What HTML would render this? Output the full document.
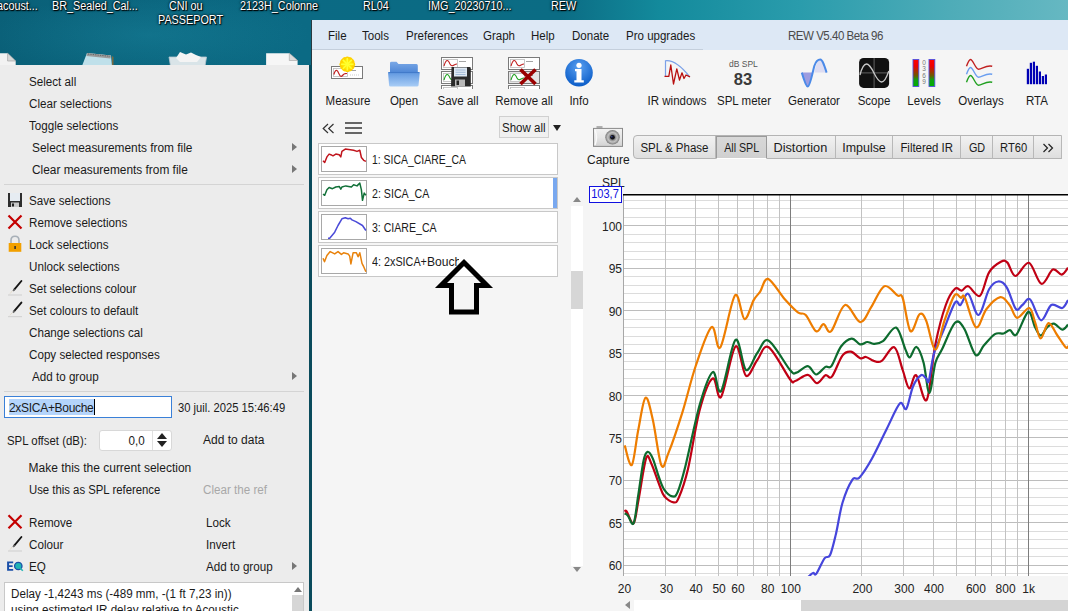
<!DOCTYPE html>
<html><head><meta charset="utf-8">
<style>
*{margin:0;padding:0;box-sizing:border-box}
html,body{width:1068px;height:611px;overflow:hidden;background:#0b6a80}
body{position:relative;font-family:"Liberation Sans",sans-serif;font-size:12px;color:#1a1a1a}
.a{position:absolute;white-space:nowrap}
#desk{position:absolute;left:0;top:0;width:1068px;height:611px;background:radial-gradient(ellipse 160px 40px at 150px 35px,rgba(30,140,165,.35),rgba(30,140,165,0)),linear-gradient(90deg,#0a6078 0px,#0b6a84 300px,#0b6c84 560px,#138a9c 660px,#2a9cac 800px,#4eacb8 950px,#66b8c2 1068px)}
.dt{position:absolute;transform:scaleX(0.9);transform-origin:0 0;color:#fff;font-size:12px;text-shadow:0 0 2px #000,0 0 3px rgba(0,0,0,.7),1px 1px 1px #000;white-space:nowrap;line-height:14px}
#menu{position:absolute;left:0;top:65px;width:309px;height:546px;background:#ececec}
.mi{position:absolute;left:28.5px;line-height:14px;white-space:nowrap;transform:scaleX(0.97);transform-origin:0 0}
.sep{position:absolute;left:4px;width:300px;height:1px;background:#d4d4d4}
.sub{position:absolute;left:292px;width:0;height:0;border-top:4px solid transparent;border-bottom:4px solid transparent;border-left:5px solid #777}
#win{position:absolute;left:311px;top:20px;width:757px;height:591px;background:#f5f5f5;border-left:1px solid #2a3a40}
#mbar{position:absolute;left:312px;top:20px;width:756px;height:30px;background:#dde8f5}
.mb{position:absolute;top:29px;line-height:14px;white-space:nowrap;transform:scaleX(0.96);transform-origin:0 0}
.tl{position:absolute;top:94px;line-height:14px;white-space:nowrap;font-size:12px;transform:scaleX(0.96)}
.row{position:absolute;left:318px;width:240px;height:32px;background:#fff;border:1px solid #c8c8c8}
.thumb{position:absolute;left:2px;top:2px;width:46px;height:26px;border:1.3px solid #a8a8a8;background:#fff}
.rl{position:absolute;left:52.5px;top:9px;transform:scaleX(0.87);transform-origin:0 0;line-height:14px;white-space:nowrap}
.tab{position:absolute;top:136px;height:23px;line-height:24px;text-align:center;border-right:1px solid #b8b8b8;white-space:nowrap}
.yl{position:absolute;right:446px;line-height:14px;text-align:right;color:#222}
.xl{position:absolute;top:582px;line-height:14px;color:#222;white-space:nowrap}
</style></head><body>
<div id="desk"></div>
<!-- desktop labels -->
<div class="dt" style="left:-3px;top:-1px">acoust...</div>
<div class="dt" style="left:52px;top:-1px">BR_Sealed_Cal...</div>
<div class="dt" style="left:169px;top:-1px">CNI ou</div>
<div class="dt" style="left:158px;top:13px">PASSEPORT</div>
<div class="dt" style="left:240px;top:-1px">2123H_Colonne</div>
<div class="dt" style="left:363px;top:-1px">RL04</div>
<div class="dt" style="left:428px;top:-1px">IMG_20230710...</div>
<div class="dt" style="left:551px;top:-1px">REW</div>
<!-- desktop icons peeking -->
<svg class="a" style="left:0;top:48px" width="312" height="17" viewBox="0 48 312 17">
<path d="M-1,53.2 L7.6,53.2 L15.7,61 L15.7,66 L-1,66 Z" fill="#f2f2f2"/>
<path d="M7.6,53.2 L7.6,61 L15.7,61 Z" fill="#d8d8d8" stroke="#9a9a9a" stroke-width="0.6"/>
<path d="M87,53 L111,55.5 L112,66 L82,66 Z" fill="#bfe0ea"/>
<path d="M87,53 L111,55.5 L110.5,58.5 L86.5,56 Z" fill="#9a9a9a"/>
<path d="M88,54 L110,56.3" stroke="#555" stroke-width="0.8" stroke-dasharray="1.2,1.2"/>
<path d="M112,56 L113.5,57 L113.5,66 L112,66 Z" fill="#7a6a40"/>
<path d="M169,57 L206.5,57 L205,66 L170.5,66 Z" fill="#d9e4e8" stroke="#b8c8d0" stroke-width="0.8"/>
<path d="M176,58 L180,52 L186,54.5 L191,52.5 L196,55 L201,57 L197,62 L180,62 Z" fill="#f4f4f4"/>
<path d="M266.1,53.2 L289.3,53.2 L297.6,60.5 L297.6,66 L266.1,66 Z" fill="#f6f6f6"/>
<path d="M289.3,53.2 L289.3,60.5 L297.6,60.5 Z" fill="#dcdcdc" stroke="#a0a0a0" stroke-width="0.6"/>
</svg>
<!-- REW window -->
<div id="win"></div><div class="a" style="left:309px;top:65px;width:3px;height:546px;background:#0a4b5c"></div>
<div id="mbar"></div><div class="a" style="left:312px;top:49px;width:391px;height:1px;background:#c4cfdc"></div>
<div class="mb" style="left:328px">File</div>
<div class="mb" style="left:362px">Tools</div>
<div class="mb" style="left:406px">Preferences</div>
<div class="mb" style="left:483px">Graph</div>
<div class="mb" style="left:531px">Help</div>
<div class="mb" style="left:572px">Donate</div>
<div class="mb" style="left:626px">Pro upgrades</div>
<div class="mb" style="left:788px;color:#4a4a4a;letter-spacing:-0.5px">REW V5.40 Beta 96</div>

<div class="tl" style="left:347.7px;width:100px;margin-left:-50px;text-align:center">Measure</div>
<div class="tl" style="left:404.3px;width:100px;margin-left:-50px;text-align:center">Open</div>
<div class="tl" style="left:457.6px;width:100px;margin-left:-50px;text-align:center">Save all</div>
<div class="tl" style="left:524.1px;width:100px;margin-left:-50px;text-align:center">Remove all</div>
<div class="tl" style="left:579.4px;width:100px;margin-left:-50px;text-align:center">Info</div>
<div class="tl" style="left:677.0px;width:100px;margin-left:-50px;text-align:center">IR windows</div>
<div class="tl" style="left:743.5px;width:100px;margin-left:-50px;text-align:center">SPL meter</div>
<div class="tl" style="left:814.2px;width:100px;margin-left:-50px;text-align:center">Generator</div>
<div class="tl" style="left:874.1px;width:100px;margin-left:-50px;text-align:center">Scope</div>
<div class="tl" style="left:924.1px;width:100px;margin-left:-50px;text-align:center">Levels</div>
<div class="tl" style="left:980.8px;width:100px;margin-left:-50px;text-align:center">Overlays</div>
<div class="tl" style="left:1037.3px;width:100px;margin-left:-50px;text-align:center">RTA</div>
<svg class="a" style="left:328px;top:55px" width="40" height="28" viewBox="328 55 40 28"><rect x="331.5" y="66.5" width="31" height="12" fill="#fff" stroke="#7a7a7a" stroke-width="1"/><rect x="333.5" y="68.5" width="14" height="8" fill="#fff" stroke="#bbb" stroke-width="0.8"/><path d="M333.8,74.5 C335,71 336,69.8 337,70.5 C338.5,71.5 339.5,76.5 341,76.4 C342.5,76.3 343.5,73.6 345,73.6 L347,73.5" fill="none" stroke="#c02020" stroke-width="1.2"/><line x1="349" y1="70.5" x2="356" y2="70.5" stroke="#666" stroke-width="0.6"/><line x1="350" y1="75" x2="359" y2="75" stroke="#999" stroke-width="0.5" stroke-dasharray="1,1"/><g transform="translate(347.3,64.3)"><ellipse cx="0" cy="-5" rx="2.6" ry="2.8" fill="#ffd200" transform="rotate(0)"/><ellipse cx="0" cy="-5" rx="2.6" ry="2.8" fill="#ffd200" transform="rotate(30)"/><ellipse cx="0" cy="-5" rx="2.6" ry="2.8" fill="#ffd200" transform="rotate(60)"/><ellipse cx="0" cy="-5" rx="2.6" ry="2.8" fill="#ffd200" transform="rotate(90)"/><ellipse cx="0" cy="-5" rx="2.6" ry="2.8" fill="#ffd200" transform="rotate(120)"/><ellipse cx="0" cy="-5" rx="2.6" ry="2.8" fill="#ffd200" transform="rotate(150)"/><ellipse cx="0" cy="-5" rx="2.6" ry="2.8" fill="#ffd200" transform="rotate(180)"/><ellipse cx="0" cy="-5" rx="2.6" ry="2.8" fill="#ffd200" transform="rotate(210)"/><ellipse cx="0" cy="-5" rx="2.6" ry="2.8" fill="#ffd200" transform="rotate(240)"/><ellipse cx="0" cy="-5" rx="2.6" ry="2.8" fill="#ffd200" transform="rotate(270)"/><ellipse cx="0" cy="-5" rx="2.6" ry="2.8" fill="#ffd200" transform="rotate(300)"/><ellipse cx="0" cy="-5" rx="2.6" ry="2.8" fill="#ffd200" transform="rotate(330)"/><circle cx="0" cy="0" r="5.2" fill="#ffe600"/><line x1="0" y1="0" x2="0" y2="-6.3" stroke="#ffff30" stroke-width="1.6" transform="rotate(0)"/><line x1="0" y1="0" x2="0" y2="-6.3" stroke="#ffff30" stroke-width="1.6" transform="rotate(45)"/><line x1="0" y1="0" x2="0" y2="-6.3" stroke="#ffff30" stroke-width="1.6" transform="rotate(90)"/><line x1="0" y1="0" x2="0" y2="-6.3" stroke="#ffff30" stroke-width="1.6" transform="rotate(135)"/><line x1="0" y1="0" x2="0" y2="-6.3" stroke="#ffff30" stroke-width="1.6" transform="rotate(180)"/><line x1="0" y1="0" x2="0" y2="-6.3" stroke="#ffff30" stroke-width="1.6" transform="rotate(225)"/><line x1="0" y1="0" x2="0" y2="-6.3" stroke="#ffff30" stroke-width="1.6" transform="rotate(270)"/><line x1="0" y1="0" x2="0" y2="-6.3" stroke="#ffff30" stroke-width="1.6" transform="rotate(315)"/></g></svg>
<svg class="a" style="left:385px;top:58px" width="40" height="32" viewBox="385 58 40 32"><defs><linearGradient id="fb" x1="0" y1="0" x2="0" y2="1"><stop offset="0" stop-color="#7aa8e6"/><stop offset="1" stop-color="#4d86d6"/></linearGradient><linearGradient id="ff" x1="0" y1="0" x2="0" y2="1"><stop offset="0" stop-color="#5f97e0"/><stop offset="1" stop-color="#a9cdf6"/></linearGradient></defs><path d="M390,63 Q390,61.8 391.5,61.8 L396.5,61.8 L398.5,64 L416.5,64 Q417.8,64 417.8,65.5 L417.8,73 L390,73 Z" fill="url(#fb)"/><path d="M388,72.2 L419.8,72.2 L418.5,85.5 Q418.3,86.6 417,86.6 L390.5,86.6 Q389.2,86.6 389.1,85.5 Z" fill="url(#ff)"/><line x1="388.5" y1="72.6" x2="419.3" y2="72.6" stroke="#3f78c8" stroke-width="1"/></svg>
<svg class="a" style="left:438px;top:55px" width="40" height="34" viewBox="438 55 40 34"><rect x="441.5" y="57.5" width="31" height="12" fill="#fff" stroke="#7a7a7a" stroke-width="1"/><rect x="443.5" y="59.5" width="14" height="8" fill="#fff" stroke="#bbb" stroke-width="0.8"/><path d="M444,66 c2,-7 4,-7 6,-2 c2,4 4,0 7,0" fill="none" stroke="#c02020" stroke-width="1.1"/><line x1="459" y1="61.5" x2="466" y2="61.5" stroke="#666" stroke-width="0.6"/><rect x="441.5" y="71.5" width="31" height="12" fill="#fff" stroke="#7a7a7a" stroke-width="1"/><rect x="443.5" y="73.5" width="14" height="8" fill="#fff" stroke="#bbb" stroke-width="0.8"/><path d="M444,80 c2,-7 4,-7 6,-2 c2,4 4,0 7,0" fill="none" stroke="#20a020" stroke-width="1.1"/><line x1="459" y1="75.5" x2="466" y2="75.5" stroke="#666" stroke-width="0.6"/><rect x="441.5" y="85.5" width="31" height="12" fill="#fff" stroke="#7a7a7a" stroke-width="1"/><rect x="443.5" y="87.5" width="14" height="8" fill="#fff" stroke="#bbb" stroke-width="0.8"/><line x1="459" y1="89.5" x2="466" y2="89.5" stroke="#666" stroke-width="0.6"/><path d="M451.5,68 Q451,67 452,67 L469.5,67 Q470.8,67 470.8,68.3 L470.8,86.5 L451,86.5 Z" fill="#2a2a2a"/><rect x="454" y="67.5" width="13" height="9" fill="#dfe9f3"/><line x1="455.5" y1="70" x2="465.5" y2="70" stroke="#8aa8c8" stroke-width="0.7"/><line x1="455.5" y1="72.3" x2="465.5" y2="72.3" stroke="#8aa8c8" stroke-width="0.7"/><line x1="455.5" y1="74.5" x2="465.5" y2="74.5" stroke="#8aa8c8" stroke-width="0.7"/><rect x="455" y="79.5" width="10" height="7" fill="#b8b8b8"/><rect x="456.5" y="80.5" width="2.5" height="4.5" fill="#222"/></svg>
<svg class="a" style="left:505px;top:55px" width="40" height="34" viewBox="505 55 40 34"><rect x="508.5" y="57.5" width="31" height="12" fill="#fff" stroke="#7a7a7a" stroke-width="1"/><rect x="510.5" y="59.5" width="14" height="8" fill="#fff" stroke="#bbb" stroke-width="0.8"/><path d="M511,66 c2,-7 4,-7 6,-2 c2,4 4,0 7,0" fill="none" stroke="#c02020" stroke-width="1.1"/><line x1="526" y1="61.5" x2="533" y2="61.5" stroke="#666" stroke-width="0.6"/><rect x="508.5" y="71.5" width="31" height="12" fill="#e4e4e4" stroke="#7a7a7a" stroke-width="1"/><rect x="510.5" y="73.5" width="14" height="8" fill="#fff" stroke="#bbb" stroke-width="0.8"/><path d="M511,80 c2,-7 4,-7 6,-2 c2,4 4,0 7,0" fill="none" stroke="#20a020" stroke-width="1.1"/><line x1="526" y1="75.5" x2="533" y2="75.5" stroke="#666" stroke-width="0.6"/><rect x="508.5" y="85.5" width="31" height="12" fill="#fff" stroke="#7a7a7a" stroke-width="1"/><rect x="510.5" y="87.5" width="14" height="8" fill="#fff" stroke="#bbb" stroke-width="0.8"/><line x1="526" y1="89.5" x2="533" y2="89.5" stroke="#666" stroke-width="0.6"/><path d="M520.5,69.5 L535.5,84 M535.5,69.5 L520.5,84" stroke="#9a0000" stroke-width="3.6" stroke-linecap="butt"/></svg>
<svg class="a" style="left:563px;top:57px" width="32" height="32" viewBox="563 57 32 32"><defs><radialGradient id="ig" cx="0.5" cy="0.3" r="0.7"><stop offset="0" stop-color="#5aa0f0"/><stop offset="1" stop-color="#0a5cc8"/></radialGradient></defs><circle cx="579" cy="72.8" r="13.8" fill="url(#ig)"/><circle cx="579" cy="65.3" r="2.6" fill="#fff"/><path d="M575,69 L581.5,69 L581.5,80.3 L583.8,80.3 L583.8,82.6 L574.3,82.6 L574.3,80.3 L576.5,80.3 L576.5,71.3 L575,71.3 Z" fill="#fff"/></svg>
<svg class="a" style="left:660px;top:57px" width="34" height="30" viewBox="660 57 34 30"><path d="M665.5,76.5 L665.5,60.8 Q676,59.5 689.8,77" fill="none" stroke="#7aa0e8" stroke-width="1.2"/><path d="M664.5,76.3 L668.8,76.3 L670.8,65 L673.5,84 L676.8,68.8 L679.5,80 L682,72.8 L684,78.5 L686,75 L690,76.8" fill="none" stroke="#b81010" stroke-width="1.3" stroke-linejoin="round"/></svg>
<div class="a" style="left:729px;top:59px;font-size:8.5px;line-height:10px;color:#555;width:28px;text-align:center">dB SPL</div>
<div class="a" style="left:729px;top:70px;font-size:16.5px;font-weight:bold;line-height:18px;color:#3a3a3a;width:28px;text-align:center">83</div>
<svg class="a" style="left:798px;top:56px" width="32" height="34" viewBox="798 56 32 34"><path d="M801.8,72.6 C804,80 806,86.6 807.7,86.6 C809.5,86.6 811,79 812.2,72.6 Z" fill="#9c9ce0"/><path d="M814.3,72.6 C815.5,66 818,59.6 820.3,59.6 C822.5,59.6 824.5,66 826.6,72.6 Z" fill="#dcdcf2"/><path d="M801.8,72.6 C804,80 806,86.6 807.7,86.6 C810,86.6 812.5,72.6 814.3,66 C815.8,61.5 818,59.6 820.3,59.6 C822.5,59.6 824.5,66 826.6,72.6" fill="none" stroke="#4a8ae8" stroke-width="2"/></svg>
<svg class="a" style="left:857px;top:56px" width="34" height="34" viewBox="857 56 34 34"><rect x="859.1" y="57.9" width="30" height="30" rx="4.5" fill="#111"/><line x1="874.1" y1="58" x2="874.1" y2="88" stroke="#777" stroke-width="0.8"/><line x1="859" y1="72.9" x2="889" y2="72.9" stroke="#777" stroke-width="0.8"/><path d="M860,75 C862,67 864.5,64 866.5,64 C869,64 871.5,68 874,73 C876.5,78 879,82 881.5,82 C884,82 886.5,78 888.8,71" fill="none" stroke="#c8c8c8" stroke-width="1.3"/></svg>
<svg class="a" style="left:910px;top:57px" width="28" height="32" viewBox="910 57 28 32"><defs><linearGradient id="lv" x1="0" y1="0" x2="0" y2="1"><stop offset="0" stop-color="#ff0000"/><stop offset="0.25" stop-color="#ee0000"/><stop offset="0.6" stop-color="#6a5a00"/><stop offset="0.75" stop-color="#10a010"/><stop offset="1" stop-color="#00b000"/></linearGradient></defs><rect x="913" y="59.5" width="5.8" height="27" fill="url(#lv)" stroke="#5050e0" stroke-width="0.9"/><rect x="929" y="59.5" width="5.8" height="27" fill="url(#lv)" stroke="#5050e0" stroke-width="0.9"/><text x="924" y="64.8" font-size="6.5" fill="#777" text-anchor="middle" font-family="Liberation Sans">0</text><text x="924" y="71.3" font-size="6.5" fill="#777" text-anchor="middle" font-family="Liberation Sans">3</text><text x="924" y="77.8" font-size="6.5" fill="#777" text-anchor="middle" font-family="Liberation Sans">6</text><text x="924" y="84.3" font-size="6.5" fill="#777" text-anchor="middle" font-family="Liberation Sans">9</text></svg>
<svg class="a" style="left:963px;top:56px" width="32" height="32" viewBox="963 56 32 32"><path d="M966.5,66.2 C968,62.2 969.5,59.5 970.5,59.5 C973,59.5 975.5,69.2 978.5,69.2 C982,69.2 986,64.7 992.2,66.2" fill="none" stroke="#c02020" stroke-width="1.4"/><path d="M966.5,74.2 C968,70.2 969.5,67.5 970.5,67.5 C973,67.5 975.5,77.2 978.5,77.2 C982,77.2 986,72.7 992.2,74.2" fill="none" stroke="#6a9ef0" stroke-width="1.4"/><path d="M966.5,82.2 C968,78.2 969.5,75.5 970.5,75.5 C973,75.5 975.5,85.2 978.5,85.2 C982,85.2 986,80.7 992.2,82.2" fill="none" stroke="#20a020" stroke-width="1.4"/></svg>
<svg class="a" style="left:1024px;top:58px" width="26" height="30" viewBox="1024 58 26 30"><rect x="1026.8" y="68.8" width="2.2" height="15.400000000000006" fill="#0000b4"/><rect x="1029.8" y="62.8" width="2.2" height="21.400000000000006" fill="#0000b4"/><rect x="1032.8" y="61.7" width="2.2" height="22.5" fill="#0000b4"/><rect x="1035.8" y="65.8" width="2.2" height="18.400000000000006" fill="#0000b4"/><rect x="1038.8" y="71.5" width="2.2" height="12.700000000000003" fill="#0000b4"/><rect x="1041.8" y="76" width="2.2" height="8.200000000000003" fill="#0000b4"/><rect x="1044.8" y="74.5" width="2.2" height="9.700000000000003" fill="#0000b4"/></svg>

<!-- measurement panel -->
<svg class="a" style="left:320px;top:121px" width="16" height="14" viewBox="320 121 16 14"><path d="M328,124 L323.2,128.5 L328,133 M333.5,124 L328.7,128.5 L333.5,133" fill="none" stroke="#333" stroke-width="1.2"/></svg>
<div class="a" style="left:345px;top:122px;width:17px;height:2px;background:#666"></div>
<div class="a" style="left:345px;top:127px;width:17px;height:2px;background:#666"></div>
<div class="a" style="left:345px;top:132px;width:17px;height:2px;background:#666"></div>
<div class="a" style="left:499px;top:116px;width:50px;height:22px;border:1px solid #d0d0d0;background:#f0f0f0"></div>
<div class="a" style="left:502px;top:121px;line-height:14px;transform:scaleX(0.96);transform-origin:0 0">Show all</div>
<div class="a" style="left:553px;top:125px;width:0;height:0;border-left:4.5px solid transparent;border-right:4.5px solid transparent;border-top:6px solid #222"></div>
<div class="row" style="top:143px;overflow:hidden"><div class="thumb"></div><div class="a" style="left:52px;top:0;width:180px;height:30px;overflow:hidden"><div class="rl" style="left:0.5px;transform:scaleX(0.87)">1: SICA_CIARE_CA</div></div></div>
<div class="row" style="top:177px;overflow:hidden"><div class="thumb"></div><div class="a" style="left:52px;top:0;width:180px;height:30px;overflow:hidden"><div class="rl" style="left:0.5px;transform:scaleX(0.887)">2: SICA_CA</div></div><div class="a" style="left:234px;top:0;width:4px;height:30px;background:#79a8ef"></div></div>
<div class="row" style="top:211px;overflow:hidden"><div class="thumb"></div><div class="a" style="left:52px;top:0;width:180px;height:30px;overflow:hidden"><div class="rl" style="left:0.5px;transform:scaleX(0.88)">3: CIARE_CA</div></div></div>
<div class="row" style="top:245px;overflow:hidden"><div class="thumb"></div><div class="a" style="left:52px;top:0;width:88px;height:30px;overflow:hidden"><div class="rl" style="left:0.5px;transform:scaleX(0.9)">4: 2xSICA+<span style="display:inline-block;transform:scaleX(1.12);transform-origin:0 0">Bouche</span></div></div></div>
<div class="a" style="left:571px;top:206px;width:12px;height:360px;background:#fff"></div>
<div class="a" style="left:571px;top:271px;width:12px;height:38px;background:#d6d6d6"></div>
<div class="a" style="left:573px;top:197px;width:0;height:0;border-left:4px solid transparent;border-right:4px solid transparent;border-bottom:5px solid #888"></div>
<div class="a" style="left:573px;top:567px;width:0;height:0;border-left:4px solid transparent;border-right:4px solid transparent;border-top:5px solid #888"></div>
<svg class="a" style="left:430px;top:250px" width="70" height="70" viewBox="430 250 70 70"><path d="M464,262.5 L441,285.5 L451.5,285.5 L451.5,312 L476.5,312 L476.5,285.5 L487,285.5 Z" fill="none" stroke="#000" stroke-width="5" stroke-linejoin="miter"/></svg>
<svg class="a" style="left:318px;top:143px" width="52" height="136" viewBox="318 143 52 136"><polyline points="323.0,160.8 324.7,162.5 326.9,156.9 329.1,154.1 330.8,154.7 333.0,155.8 335.8,154.1 339.2,154.7 340.8,156.9 341.9,151.4 345.3,149.1 350.3,149.7 353.6,150.2 357.0,151.4 359.8,150.2 361.4,157.5 363.7,160.3 365.9,161.4" fill="none" stroke="#c0141c" stroke-width="1.5" stroke-linejoin="round"/><polyline points="323.0,194.2 324.7,195.3 326.9,189.8 329.1,187.5 332.5,188.7 335.8,187.0 339.2,186.4 340.8,189.2 341.9,187.0 345.8,185.9 351.4,187.0 353.6,184.8 357.0,185.9 359.8,183.1 361.4,189.8 362.5,200.3 364.2,193.1 365.9,195.3" fill="none" stroke="#117038" stroke-width="1.5" stroke-linejoin="round"/><polyline points="328.0,238.3 329.7,238.3 334.7,232.2 338.0,225.5 341.9,218.8 345.3,217.7 348.1,218.8 350.3,218.2 352.0,219.9 355.9,221.6 362.5,225.5 365.9,230.5" fill="none" stroke="#4a4ad8" stroke-width="1.5" stroke-linejoin="round"/><polyline points="323.0,258.3 324.5,261.7 326.9,255.5 330.2,251.6 334.7,253.9 338.0,251.6 341.4,254.4 343.6,252.8 348.1,253.9 349.7,256.1 350.9,263.9 353.1,252.8 356.4,252.8 358.1,256.7 359.8,252.8 362.0,263.3 363.7,266.7 365.9,271.7" fill="none" stroke="#e8820c" stroke-width="1.5" stroke-linejoin="round"/></svg>

<!-- graph -->
<svg class="a" style="left:623px;top:194px" width="445" height="382" viewBox="623 194 445 382">
<rect x="623" y="194" width="445" height="382" fill="#fff"/>
<line x1="623" y1="573.5" x2="1068" y2="573.5" stroke="#dcdcdc" stroke-width="1" shape-rendering="crispEdges"/>
<line x1="623" y1="565.5" x2="1068" y2="565.5" stroke="#bdbdbd" stroke-width="1" shape-rendering="crispEdges"/>
<line x1="623" y1="556.5" x2="1068" y2="556.5" stroke="#dcdcdc" stroke-width="1" shape-rendering="crispEdges"/>
<line x1="623" y1="548.5" x2="1068" y2="548.5" stroke="#dcdcdc" stroke-width="1" shape-rendering="crispEdges"/>
<line x1="623" y1="539.5" x2="1068" y2="539.5" stroke="#dcdcdc" stroke-width="1" shape-rendering="crispEdges"/>
<line x1="623" y1="531.5" x2="1068" y2="531.5" stroke="#dcdcdc" stroke-width="1" shape-rendering="crispEdges"/>
<line x1="623" y1="522.5" x2="1068" y2="522.5" stroke="#bdbdbd" stroke-width="1" shape-rendering="crispEdges"/>
<line x1="623" y1="514.5" x2="1068" y2="514.5" stroke="#dcdcdc" stroke-width="1" shape-rendering="crispEdges"/>
<line x1="623" y1="505.5" x2="1068" y2="505.5" stroke="#dcdcdc" stroke-width="1" shape-rendering="crispEdges"/>
<line x1="623" y1="497.5" x2="1068" y2="497.5" stroke="#dcdcdc" stroke-width="1" shape-rendering="crispEdges"/>
<line x1="623" y1="488.5" x2="1068" y2="488.5" stroke="#dcdcdc" stroke-width="1" shape-rendering="crispEdges"/>
<line x1="623" y1="480.5" x2="1068" y2="480.5" stroke="#bdbdbd" stroke-width="1" shape-rendering="crispEdges"/>
<line x1="623" y1="471.5" x2="1068" y2="471.5" stroke="#dcdcdc" stroke-width="1" shape-rendering="crispEdges"/>
<line x1="623" y1="463.5" x2="1068" y2="463.5" stroke="#dcdcdc" stroke-width="1" shape-rendering="crispEdges"/>
<line x1="623" y1="454.5" x2="1068" y2="454.5" stroke="#dcdcdc" stroke-width="1" shape-rendering="crispEdges"/>
<line x1="623" y1="446.5" x2="1068" y2="446.5" stroke="#dcdcdc" stroke-width="1" shape-rendering="crispEdges"/>
<line x1="623" y1="437.5" x2="1068" y2="437.5" stroke="#bdbdbd" stroke-width="1" shape-rendering="crispEdges"/>
<line x1="623" y1="429.5" x2="1068" y2="429.5" stroke="#dcdcdc" stroke-width="1" shape-rendering="crispEdges"/>
<line x1="623" y1="420.5" x2="1068" y2="420.5" stroke="#dcdcdc" stroke-width="1" shape-rendering="crispEdges"/>
<line x1="623" y1="412.5" x2="1068" y2="412.5" stroke="#dcdcdc" stroke-width="1" shape-rendering="crispEdges"/>
<line x1="623" y1="403.5" x2="1068" y2="403.5" stroke="#dcdcdc" stroke-width="1" shape-rendering="crispEdges"/>
<line x1="623" y1="395.5" x2="1068" y2="395.5" stroke="#bdbdbd" stroke-width="1" shape-rendering="crispEdges"/>
<line x1="623" y1="386.5" x2="1068" y2="386.5" stroke="#dcdcdc" stroke-width="1" shape-rendering="crispEdges"/>
<line x1="623" y1="378.5" x2="1068" y2="378.5" stroke="#dcdcdc" stroke-width="1" shape-rendering="crispEdges"/>
<line x1="623" y1="369.5" x2="1068" y2="369.5" stroke="#dcdcdc" stroke-width="1" shape-rendering="crispEdges"/>
<line x1="623" y1="361.5" x2="1068" y2="361.5" stroke="#dcdcdc" stroke-width="1" shape-rendering="crispEdges"/>
<line x1="623" y1="353.5" x2="1068" y2="353.5" stroke="#bdbdbd" stroke-width="1" shape-rendering="crispEdges"/>
<line x1="623" y1="344.5" x2="1068" y2="344.5" stroke="#dcdcdc" stroke-width="1" shape-rendering="crispEdges"/>
<line x1="623" y1="336.5" x2="1068" y2="336.5" stroke="#dcdcdc" stroke-width="1" shape-rendering="crispEdges"/>
<line x1="623" y1="327.5" x2="1068" y2="327.5" stroke="#dcdcdc" stroke-width="1" shape-rendering="crispEdges"/>
<line x1="623" y1="319.5" x2="1068" y2="319.5" stroke="#dcdcdc" stroke-width="1" shape-rendering="crispEdges"/>
<line x1="623" y1="310.5" x2="1068" y2="310.5" stroke="#bdbdbd" stroke-width="1" shape-rendering="crispEdges"/>
<line x1="623" y1="302.5" x2="1068" y2="302.5" stroke="#dcdcdc" stroke-width="1" shape-rendering="crispEdges"/>
<line x1="623" y1="293.5" x2="1068" y2="293.5" stroke="#dcdcdc" stroke-width="1" shape-rendering="crispEdges"/>
<line x1="623" y1="285.5" x2="1068" y2="285.5" stroke="#dcdcdc" stroke-width="1" shape-rendering="crispEdges"/>
<line x1="623" y1="276.5" x2="1068" y2="276.5" stroke="#dcdcdc" stroke-width="1" shape-rendering="crispEdges"/>
<line x1="623" y1="268.5" x2="1068" y2="268.5" stroke="#bdbdbd" stroke-width="1" shape-rendering="crispEdges"/>
<line x1="623" y1="259.5" x2="1068" y2="259.5" stroke="#dcdcdc" stroke-width="1" shape-rendering="crispEdges"/>
<line x1="623" y1="251.5" x2="1068" y2="251.5" stroke="#dcdcdc" stroke-width="1" shape-rendering="crispEdges"/>
<line x1="623" y1="242.5" x2="1068" y2="242.5" stroke="#dcdcdc" stroke-width="1" shape-rendering="crispEdges"/>
<line x1="623" y1="234.5" x2="1068" y2="234.5" stroke="#dcdcdc" stroke-width="1" shape-rendering="crispEdges"/>
<line x1="623" y1="225.5" x2="1068" y2="225.5" stroke="#bdbdbd" stroke-width="1" shape-rendering="crispEdges"/>
<line x1="623" y1="217.5" x2="1068" y2="217.5" stroke="#dcdcdc" stroke-width="1" shape-rendering="crispEdges"/>
<line x1="623" y1="208.5" x2="1068" y2="208.5" stroke="#dcdcdc" stroke-width="1" shape-rendering="crispEdges"/>
<line x1="623" y1="200.5" x2="1068" y2="200.5" stroke="#dcdcdc" stroke-width="1" shape-rendering="crispEdges"/>
<line x1="623.5" y1="194" x2="623.5" y2="576" stroke="#c2c2c2" stroke-width="1" shape-rendering="crispEdges"/>
<line x1="665.5" y1="194" x2="665.5" y2="576" stroke="#c2c2c2" stroke-width="1" shape-rendering="crispEdges"/>
<line x1="695.5" y1="194" x2="695.5" y2="576" stroke="#c2c2c2" stroke-width="1" shape-rendering="crispEdges"/>
<line x1="718.5" y1="194" x2="718.5" y2="576" stroke="#c2c2c2" stroke-width="1" shape-rendering="crispEdges"/>
<line x1="737.5" y1="194" x2="737.5" y2="576" stroke="#c2c2c2" stroke-width="1" shape-rendering="crispEdges"/>
<line x1="753.5" y1="194" x2="753.5" y2="576" stroke="#c2c2c2" stroke-width="1" shape-rendering="crispEdges"/>
<line x1="767.5" y1="194" x2="767.5" y2="576" stroke="#c2c2c2" stroke-width="1" shape-rendering="crispEdges"/>
<line x1="779.5" y1="194" x2="779.5" y2="576" stroke="#c2c2c2" stroke-width="1" shape-rendering="crispEdges"/>
<line x1="790.5" y1="194" x2="790.5" y2="576" stroke="#7d7d7d" stroke-width="1" shape-rendering="crispEdges"/>
<line x1="861.5" y1="194" x2="861.5" y2="576" stroke="#c2c2c2" stroke-width="1" shape-rendering="crispEdges"/>
<line x1="903.5" y1="194" x2="903.5" y2="576" stroke="#c2c2c2" stroke-width="1" shape-rendering="crispEdges"/>
<line x1="933.5" y1="194" x2="933.5" y2="576" stroke="#c2c2c2" stroke-width="1" shape-rendering="crispEdges"/>
<line x1="956.5" y1="194" x2="956.5" y2="576" stroke="#c2c2c2" stroke-width="1" shape-rendering="crispEdges"/>
<line x1="975.5" y1="194" x2="975.5" y2="576" stroke="#c2c2c2" stroke-width="1" shape-rendering="crispEdges"/>
<line x1="991.5" y1="194" x2="991.5" y2="576" stroke="#c2c2c2" stroke-width="1" shape-rendering="crispEdges"/>
<line x1="1005.5" y1="194" x2="1005.5" y2="576" stroke="#c2c2c2" stroke-width="1" shape-rendering="crispEdges"/>
<line x1="1017.5" y1="194" x2="1017.5" y2="576" stroke="#c2c2c2" stroke-width="1" shape-rendering="crispEdges"/>
<line x1="1028.5" y1="194" x2="1028.5" y2="576" stroke="#7d7d7d" stroke-width="1" shape-rendering="crispEdges"/>
<line x1="1099.5" y1="194" x2="1099.5" y2="576" stroke="#c2c2c2" stroke-width="1" shape-rendering="crispEdges"/>
<line x1="623" y1="576.5" x2="1068" y2="576.5" stroke="#b0b0b0" stroke-width="1" shape-rendering="crispEdges"/>
<line x1="623.5" y1="194" x2="623.5" y2="577" stroke="#a8a8a8" stroke-width="1" shape-rendering="crispEdges"/>
<line x1="623" y1="194.5" x2="1068" y2="194.5" stroke="#000" stroke-width="2"/>
<path d="M624.7,512.0 C625.0,511.9 625.0,509.3 626.5,511.2 C628.0,513.1 631.6,525.2 633.6,523.3 C635.6,521.4 636.4,510.8 638.5,500.0 C640.6,489.2 644.0,464.4 646.1,458.4 C648.2,452.3 649.2,459.3 651.4,463.7 C653.6,468.1 657.0,479.2 659.2,484.6 C661.4,490.0 662.0,493.3 664.4,496.3 C666.8,499.3 671.2,502.2 673.6,502.4 C676.0,502.6 676.4,503.2 678.8,497.6 C681.2,492.0 684.5,483.5 688.0,468.9 C691.5,454.3 695.6,425.1 699.7,410.0 C703.8,394.9 709.1,380.6 712.7,378.4 C716.3,376.2 717.3,402.1 721.1,396.8 C724.9,391.5 731.4,350.0 735.5,346.5 C739.6,343.0 742.4,373.6 746.0,375.8 C749.6,378.1 753.5,364.8 757.3,360.0 C761.1,355.2 763.1,344.0 768.6,347.2 C774.1,350.4 785.6,373.6 790.0,379.2 C794.4,384.8 792.2,381.7 795.2,381.0 C798.2,380.3 804.2,374.4 807.8,374.8 C811.4,375.2 814.1,383.0 817.0,383.1 C819.9,383.2 822.9,376.4 825.4,375.3 C827.9,374.2 829.1,379.9 831.9,376.6 C834.7,373.3 839.2,359.8 842.4,355.6 C845.5,351.5 847.8,351.3 850.8,351.7 C853.8,352.1 857.7,357.3 860.2,358.2 C862.7,359.1 863.7,356.6 866.0,357.0 C868.3,357.4 871.2,360.2 873.8,360.9 C876.4,361.5 878.3,363.2 881.7,360.9 C885.1,358.6 890.8,345.7 894.3,347.2 C897.8,348.7 900.2,363.1 902.7,370.0 C905.2,376.9 907.0,387.5 909.2,388.4 C911.5,389.3 913.3,373.3 916.2,375.2 C919.1,377.1 923.5,405.0 926.7,399.9 C929.9,394.8 932.2,360.1 935.4,344.3 C938.6,328.5 942.5,314.2 945.8,305.0 C949.1,295.8 952.4,291.2 955.0,288.8 C957.6,286.4 959.4,291.0 961.6,290.6 C963.8,290.2 965.2,285.4 968.3,286.3 C971.3,287.2 976.4,298.1 979.9,295.8 C983.4,293.5 985.6,278.0 989.1,272.3 C992.6,266.6 997.9,263.4 1000.9,261.8 C1003.9,260.2 1005.0,260.2 1007.4,262.6 C1009.8,265.0 1011.9,276.0 1015.5,276.0 C1019.1,276.0 1024.6,261.5 1028.9,262.8 C1033.2,264.1 1037.4,282.7 1041.4,283.8 C1045.4,284.9 1049.4,271.1 1052.8,269.6 C1056.2,268.1 1059.2,274.9 1061.7,274.6 C1064.2,274.3 1067.0,268.9 1068.0,267.7" fill="none" stroke="#c00014" stroke-width="2.2" stroke-linejoin="round"/>
<path d="M624.7,513.3 C625.2,513.6 626.3,513.7 627.8,515.4 C629.3,517.1 631.9,526.7 633.6,523.3 C635.4,519.9 636.6,505.4 638.3,495.0 C639.9,484.6 642.0,468.2 643.5,461.0 C645.0,453.8 646.0,452.3 647.5,451.9 C649.0,451.5 650.8,454.0 652.7,458.4 C654.7,462.8 657.2,472.8 659.2,478.0 C661.2,483.2 662.2,486.8 664.4,489.8 C666.6,492.9 670.1,495.9 672.3,496.3 C674.5,496.7 675.3,497.4 677.5,492.4 C679.7,487.4 681.7,480.9 685.4,466.3 C689.1,451.7 695.2,420.5 699.7,404.8 C704.2,389.1 709.1,374.4 712.7,372.1 C716.3,369.8 717.3,396.4 721.1,391.0 C724.9,385.6 731.4,343.4 735.5,339.9 C739.6,336.4 742.4,367.8 746.0,370.0 C749.6,372.2 753.5,357.9 757.3,353.0 C761.1,348.1 763.1,337.9 768.6,340.7 C774.1,343.5 785.4,364.7 790.0,370.0 C794.6,375.3 793.5,373.3 796.5,372.7 C799.5,372.1 804.5,365.8 807.8,366.1 C811.1,366.4 813.3,374.4 816.2,374.5 C819.1,374.6 822.9,368.3 825.4,366.9 C827.9,365.5 828.8,369.5 831.4,366.1 C834.0,362.7 837.6,351.1 841.0,346.5 C844.4,341.9 848.4,339.0 851.6,338.6 C854.8,338.2 857.6,343.8 860.2,344.4 C862.8,345.0 865.0,342.1 867.3,342.0 C869.6,341.9 871.2,343.9 873.8,343.8 C876.4,343.7 879.3,343.9 883.0,341.2 C886.7,338.5 892.4,326.3 896.1,327.6 C899.8,328.9 903.0,344.1 905.3,349.1 C907.6,354.1 907.8,357.8 909.7,357.4 C911.6,357.0 914.2,346.0 916.5,346.9 C918.8,347.8 921.5,355.0 923.6,362.7 C925.7,370.4 927.3,392.8 929.3,392.8 C931.3,392.8 933.3,369.9 935.4,362.7 C937.5,355.5 938.6,356.2 941.9,349.6 C945.2,343.0 951.3,326.3 955.0,322.8 C958.7,319.3 960.8,323.3 964.2,328.6 C967.6,333.9 972.2,352.0 975.5,354.8 C978.8,357.6 980.6,349.1 983.8,345.6 C987.0,342.2 991.6,336.1 994.9,334.1 C998.2,332.1 1001.2,334.1 1003.7,333.5 C1006.2,332.9 1007.9,330.0 1010.0,330.2 C1012.1,330.4 1013.5,337.6 1016.5,334.5 C1019.5,331.4 1025.2,313.0 1028.3,311.9 C1031.4,310.8 1033.1,323.7 1035.2,327.6 C1037.3,331.5 1038.8,335.5 1040.7,335.5 C1042.7,335.5 1044.7,329.6 1046.9,327.6 C1049.1,325.6 1051.2,323.4 1053.8,323.7 C1056.4,324.0 1059.9,329.4 1062.3,329.6 C1064.7,329.8 1067.0,325.5 1068.0,324.7" fill="none" stroke="#0d6b2e" stroke-width="2.2" stroke-linejoin="round"/>
<path d="M808.2,577.0 C809.0,576.3 811.7,573.5 813.1,573.0 C814.5,572.5 814.5,576.2 816.4,573.7 C818.3,571.2 822.2,561.4 824.5,558.3 C826.8,555.2 828.2,559.1 830.1,555.0 C832.0,550.9 833.9,542.4 836.0,533.7 C838.1,525.0 839.8,511.7 842.5,502.7 C845.2,493.7 849.5,484.0 852.3,479.8 C855.1,475.6 856.2,481.1 859.5,477.5 C862.8,473.9 867.5,466.6 872.0,458.5 C876.5,450.4 882.1,438.1 886.7,429.0 C891.3,419.9 896.5,407.0 899.8,403.6 C903.1,400.2 904.1,411.7 906.3,408.8 C908.5,405.9 910.6,391.8 913.1,386.2 C915.6,380.6 918.8,376.5 921.0,375.2 C923.2,373.9 924.9,377.4 926.2,378.4 C927.5,379.4 927.5,385.1 928.8,381.0 C930.1,376.9 931.6,361.8 934.0,353.5 C936.4,345.2 939.7,339.7 943.2,331.2 C946.7,322.7 952.1,307.1 955.0,302.7 C957.9,298.3 958.2,306.5 960.4,305.0 C962.6,303.5 965.3,292.2 968.3,293.9 C971.3,295.6 975.1,315.8 978.6,315.0 C982.1,314.2 985.8,294.9 989.1,289.3 C992.4,283.7 995.3,281.8 998.2,281.5 C1001.1,281.2 1003.8,282.7 1006.7,287.3 C1009.7,291.9 1013.3,306.1 1015.9,309.0 C1018.5,311.9 1020.0,306.6 1022.4,305.0 C1024.8,303.4 1027.1,296.9 1030.2,299.5 C1033.3,302.1 1037.5,319.4 1041.0,320.3 C1044.5,321.2 1047.8,307.1 1051.3,305.0 C1054.8,302.9 1059.5,308.8 1062.3,308.0 C1065.1,307.2 1067.0,301.4 1068.0,300.1" fill="none" stroke="#4646dc" stroke-width="2.2" stroke-linejoin="round"/>
<path d="M624.7,445.4 C625.9,448.7 629.5,467.6 631.8,465.0 C634.1,462.4 636.0,440.9 638.3,429.7 C640.6,418.5 643.0,399.6 645.4,397.8 C647.8,396.1 650.1,408.0 652.7,419.2 C655.4,430.4 658.7,459.3 661.3,465.0 C663.9,470.7 664.8,462.1 668.4,453.2 C672.0,444.3 678.2,425.9 682.7,411.4 C687.2,396.9 690.9,380.0 695.7,366.0 C700.5,352.0 707.4,330.3 711.5,327.2 C715.6,324.1 716.4,352.7 720.3,347.4 C724.2,342.1 731.0,300.1 735.0,295.4 C739.0,290.7 741.4,318.3 744.5,319.1 C747.6,319.9 751.1,304.7 753.7,300.1 C756.3,295.5 757.8,295.1 760.2,291.6 C762.6,288.1 764.0,277.6 768.1,278.9 C772.2,280.2 779.8,293.7 784.8,299.3 C789.8,304.9 794.4,309.8 797.9,312.4 C801.4,315.0 802.7,311.9 805.7,315.0 C808.8,318.1 813.2,329.8 816.2,331.3 C819.2,332.8 821.0,324.2 823.5,324.2 C826.0,324.2 827.5,334.5 831.1,331.3 C834.7,328.1 840.1,306.5 845.0,305.0 C849.9,303.5 855.8,321.7 860.2,322.1 C864.6,322.5 867.2,313.2 871.2,307.2 C875.2,301.2 879.9,288.2 884.3,286.2 C888.7,284.2 894.3,293.4 897.4,295.4 C900.5,297.4 900.5,292.0 902.7,298.0 C904.9,304.0 907.7,328.5 910.5,331.2 C913.3,333.9 917.0,315.9 919.6,314.2 C922.2,312.4 923.6,314.8 926.2,320.7 C928.8,326.6 932.4,349.6 935.4,349.6 C938.4,349.6 941.3,329.7 944.5,320.7 C947.7,311.7 951.6,299.3 954.4,295.5 C957.1,291.7 959.3,297.5 961.0,297.8 C962.7,298.1 962.3,292.6 964.8,297.5 C967.3,302.4 972.4,325.4 976.0,327.3 C979.6,329.2 982.5,314.0 986.5,309.0 C990.5,304.0 996.4,297.9 1000.3,297.2 C1004.1,296.5 1006.8,301.6 1009.6,305.0 C1012.4,308.4 1013.8,317.3 1017.1,317.8 C1020.4,318.3 1026.3,307.2 1029.3,308.0 C1032.3,308.8 1033.3,317.6 1035.2,322.7 C1037.1,327.8 1038.5,338.3 1040.7,338.4 C1042.9,338.5 1045.8,323.8 1048.5,323.1 C1051.2,322.5 1054.0,330.5 1056.8,334.5 C1059.6,338.5 1063.7,345.2 1065.6,347.2 C1067.5,349.2 1067.6,346.4 1068.0,346.3" fill="none" stroke="#ee7d00" stroke-width="2.2" stroke-linejoin="round"/>
</svg>
<div class="yl" style="top:219.7px">100</div>
<div class="yl" style="top:262.1px">95</div>
<div class="yl" style="top:304.6px">90</div>
<div class="yl" style="top:347.0px">85</div>
<div class="yl" style="top:389.5px">80</div>
<div class="yl" style="top:431.9px">75</div>
<div class="yl" style="top:474.4px">70</div>
<div class="yl" style="top:516.8px">65</div>
<div class="yl" style="top:559.2px">60</div>
<div class="xl" style="left:624.5px;width:40px;margin-left:-20px;text-align:center">20</div>
<div class="xl" style="left:666.4px;width:40px;margin-left:-20px;text-align:center">30</div>
<div class="xl" style="left:696.1px;width:40px;margin-left:-20px;text-align:center">40</div>
<div class="xl" style="left:719.1px;width:40px;margin-left:-20px;text-align:center">50</div>
<div class="xl" style="left:738.0px;width:40px;margin-left:-20px;text-align:center">60</div>
<div class="xl" style="left:767.7px;width:40px;margin-left:-20px;text-align:center">80</div>
<div class="xl" style="left:790.8px;width:40px;margin-left:-20px;text-align:center">100</div>
<div class="xl" style="left:862.4px;width:40px;margin-left:-20px;text-align:center">200</div>
<div class="xl" style="left:904.3px;width:40px;margin-left:-20px;text-align:center">300</div>
<div class="xl" style="left:934.0px;width:40px;margin-left:-20px;text-align:center">400</div>
<div class="xl" style="left:975.9px;width:40px;margin-left:-20px;text-align:center">600</div>
<div class="xl" style="left:1005.6px;width:40px;margin-left:-20px;text-align:center">800</div>
<div class="xl" style="left:1028.7px;width:40px;margin-left:-20px;text-align:center">1k</div>
<div class="a" style="left:602px;top:176px;line-height:14px;color:#222">SPL</div>
<div class="a" style="left:589px;top:186px;width:33px;height:17px;border:1.5px solid #1010e0;background:#fff;color:#1010e0;line-height:15px;text-align:center"><span style="display:inline-block;transform:scaleX(0.92)">103,7</span></div>
<div class="a" style="left:634px;top:600px;width:167px;height:11px;background:#fff"></div>
<div class="a" style="left:801px;top:600px;width:267px;height:11px;background:#d4d4d4"></div>
<div class="a" style="left:625px;top:601px;width:0;height:0;border-top:4px solid transparent;border-bottom:4px solid transparent;border-right:5px solid #888"></div>
<div class="a" style="left:633px;top:135px;width:429px;height:24px;border:1px solid #b4b4b4;border-radius:4px 0 0 4px;background:linear-gradient(#f2f2f2,#dedede)"></div>
<div class="tab" style="left:634.0px;width:82.0px"><span style="display:inline-block;transform:scaleX(0.96)">SPL &amp; Phase</span></div>
<div class="tab" style="left:716.0px;width:51.0px;background:linear-gradient(#d8d8d8,#d0d0d0);border:1px solid #9a9a9a;border-bottom-color:#fff;line-height:22px"><span style="display:inline-block;transform:scaleX(0.89)">All SPL</span></div>
<div class="tab" style="left:767.0px;width:68.5px"><span style="display:inline-block;transform:scaleX(1.06)">Distortion</span></div>
<div class="tab" style="left:835.5px;width:57.9px"><span style="display:inline-block;transform:scaleX(1.035)">Impulse</span></div>
<div class="tab" style="left:893.4px;width:67.6px"><span style="display:inline-block;transform:scaleX(0.95)">Filtered IR</span></div>
<div class="tab" style="left:961.0px;width:32.0px"><span style="display:inline-block;transform:scaleX(0.9)">GD</span></div>
<div class="tab" style="left:993.0px;width:41.4px"><span style="display:inline-block;transform:scaleX(0.93)">RT60</span></div>
<div class="tab" style="left:1034.4px;width:27.3px"><svg width="12" height="10" style="vertical-align:-1px"><path d="M1.5,1 L5.5,5 L1.5,9 M6.5,1 L10.5,5 L6.5,9" fill="none" stroke="#222" stroke-width="1.2"/></svg></div>
<div class="a" style="left:587px;top:153px;line-height:14px">Capture</div>
<svg class="a" style="left:590px;top:124px" width="36" height="26" viewBox="590 124 36 26"><defs><linearGradient id="cb" x1="0" y1="0" x2="0" y2="1"><stop offset="0" stop-color="#f2f2f2"/><stop offset="0.5" stop-color="#e6e6e6"/><stop offset="1" stop-color="#d2d2d2"/></linearGradient><radialGradient id="cl" cx="0.5" cy="0.5" r="0.5"><stop offset="0" stop-color="#404040"/><stop offset="0.35" stop-color="#808080"/><stop offset="0.65" stop-color="#c4c4c4"/><stop offset="1" stop-color="#7a7a7a"/></radialGradient></defs><rect x="596.5" y="126" width="6" height="2.5" fill="#b0b0b0"/><rect x="593.5" y="128.4" width="29" height="18" fill="url(#cb)" stroke="#8a8a8a" stroke-width="1"/><path d="M595,130 Q598,137 595,145" stroke="#fafafa" stroke-width="1.5" fill="none"/><circle cx="612.5" cy="137.3" r="7.2" fill="url(#cl)"/><circle cx="612.5" cy="137.3" r="2.3" fill="#101018"/><circle cx="611.8" cy="136.8" r="0.8" fill="#3a4aa0"/></svg>

<!-- context menu -->
<div id="menu"></div>
<div class="mi" style="top:75px;left:28.5px">Select all</div>
<div class="mi" style="top:97px;left:28.5px">Clear selections</div>
<div class="mi" style="top:119px;left:28.5px">Toggle selections</div>
<div class="mi" style="top:141px;left:31.5px;transform:scaleX(0.99)">Select measurements from file</div>
<div class="mi" style="top:163px;left:31.5px;transform:scaleX(0.99)">Clear measurements from file</div>
<div class="sub" style="top:143px"></div><div class="sub" style="top:165px"></div>
<div class="sep" style="top:184px"></div>
<div class="mi" style="top:194px;left:28.5px">Save selections</div>
<div class="mi" style="top:216px;left:28.5px">Remove selections</div>
<div class="mi" style="top:238px;left:28.5px">Lock selections</div>
<div class="mi" style="top:260px;left:28.5px">Unlock selections</div>
<div class="mi" style="top:282px;left:28.5px">Set selections colour</div>
<div class="mi" style="top:304px;left:28.5px">Set colours to default</div>
<div class="mi" style="top:326px;left:28.5px">Change selections cal</div>
<div class="mi" style="top:348px;left:28.5px">Copy selected responses</div>
<div class="mi" style="top:370px;left:31.5px">Add to group</div>
<div class="sub" style="top:372px"></div>
<div class="sep" style="top:391px"></div>
<div class="a" style="left:4px;top:396px;width:168px;height:22px;border:1.5px solid #3a80d8;background:#fff"></div>
<div class="a" style="left:9px;top:399px;width:85px;height:16px;background:#b4d4fb"></div>
<div class="a" style="left:94px;top:399px;width:1px;height:16px;background:#000"></div>
<div class="mi" style="left:9px;top:401px;letter-spacing:-0.3px;transform:none">2xSICA+Bouche</div>
<div class="mi" style="left:178px;top:400.5px;transform:scaleX(0.934);transform-origin:0 0">30 juil. 2025 15:46:49</div>
<div class="mi" style="left:7px;top:434px;transform:scaleX(0.95);transform-origin:0 0">SPL offset (dB):</div>
<div class="a" style="left:99px;top:430px;width:73px;height:21px;border:1px solid #d8d8d8;border-radius:3px;background:#fff"></div>
<div class="a" style="left:152px;top:431px;width:1px;height:19px;background:#e0e0e0"></div>
<div class="mi" style="left:100px;top:434px;width:46px;text-align:right">0,0</div>
<div class="a" style="left:157px;top:433px;width:0;height:0;border-left:5px solid transparent;border-right:5px solid transparent;border-bottom:6px solid #222"></div>
<div class="a" style="left:157px;top:441px;width:0;height:0;border-left:5px solid transparent;border-right:5px solid transparent;border-top:6px solid #222"></div>
<div class="mi" style="left:203px;top:433px;transform:none">Add to data</div>
<div class="mi" style="top:460.5px;transform:none">Make this the current selection</div>
<div class="mi" style="top:482.5px;transform:scaleX(0.945)">Use this as SPL reference</div>
<div class="mi" style="left:203px;top:482.5px;color:#a8a8a8">Clear the ref</div>
<div class="mi" style="top:516px">Remove</div>
<div class="mi" style="top:538px">Colour</div>
<div class="mi" style="top:560px">EQ</div>
<div class="mi" style="left:206px;top:516px">Lock</div>
<div class="mi" style="left:206px;top:538px">Invert</div>
<div class="mi" style="left:206px;top:560px">Add to group</div>
<div class="sub" style="top:562px"></div>
<div class="a" style="left:4px;top:582px;width:300px;height:40px;border:1px solid #c8c8c8;background:#fff;overflow:hidden"><div class="a" style="left:5.5px;top:3px;line-height:16px;transform:scaleX(0.97);transform-origin:0 0">Delay -1,4243 ms (-489 mm, -(1 ft 7,23 in))<br>using estimated IR delay relative to Acoustic</div><div class="a" style="left:287px;top:0;width:12px;height:40px;background:#fff"></div><div class="a" style="left:287px;top:12px;width:12px;height:30px;background:#d6d6d6"></div><div class="a" style="left:289px;top:4px;width:0;height:0;border-left:4px solid transparent;border-right:4px solid transparent;border-bottom:5px solid #777"></div></div>
<svg class="a" style="left:6px;top:191px" width="18" height="18" viewBox="6 191 18 18"><path d="M8,193 L22,193 L22,207 L8,207 Z" fill="#2e2e2e"/><rect x="10" y="193" width="10" height="8" fill="#e6ecf2"/><rect x="11" y="202.5" width="8" height="4.5" fill="#c8c8c8"/><rect x="12" y="203.5" width="2" height="3" fill="#222"/></svg>
<svg class="a" style="left:6px;top:213px" width="18" height="18" viewBox="6 213 18 18"><path d="M8.5,215.5 L21.5,228.5 M21.5,215.5 L8.5,228.5" stroke="#c40000" stroke-width="2.2"/></svg>
<svg class="a" style="left:6px;top:512px" width="18" height="18" viewBox="6 512 18 18"><path d="M8.5,515.2 L21.5,528.2 M21.5,515.2 L8.5,528.2" stroke="#c40000" stroke-width="2.2"/></svg>
<svg class="a" style="left:6px;top:234px" width="18" height="20" viewBox="6 234 18 20"><path d="M11,243.5 L11,240.5 Q11,236.3 15,236.3 Q19,236.3 19,240.5 L19,243.5" fill="none" stroke="#a8b0b8" stroke-width="1.6"/><rect x="8.7" y="243" width="12.6" height="8.8" fill="#f2a000"/><rect x="14.3" y="246" width="1.6" height="3" fill="#333"/></svg>
<svg class="a" style="left:6px;top:279px" width="18" height="18" viewBox="6 279 18 18"><line x1="8" y1="295.0" x2="22" y2="295.0" stroke="#d4d4d4" stroke-width="1.2"/><line x1="21.4" y1="281.0" x2="14.2" y2="289.59999999999997" stroke="#151515" stroke-width="1.9" stroke-linecap="round"/><path d="M14.8,288.79999999999995 L12.6,290.79999999999995 L9,294.7 L11.4,291.79999999999995 Z" fill="#c9a35a"/><line x1="14.6" y1="289.2" x2="13" y2="291.0" stroke="#6a6a6a" stroke-width="1.6"/></svg>
<svg class="a" style="left:6px;top:301px" width="18" height="18" viewBox="6 301 18 18"><line x1="8" y1="316.6" x2="22" y2="316.6" stroke="#d4d4d4" stroke-width="1.2"/><line x1="21.4" y1="302.6" x2="14.2" y2="311.2" stroke="#151515" stroke-width="1.9" stroke-linecap="round"/><path d="M14.8,310.4 L12.6,312.4 L9,316.3 L11.4,313.4 Z" fill="#c9a35a"/><line x1="14.6" y1="310.8" x2="13" y2="312.6" stroke="#6a6a6a" stroke-width="1.6"/></svg>
<svg class="a" style="left:6px;top:535px" width="18" height="18" viewBox="6 535 18 18"><line x1="8" y1="551.0" x2="22" y2="551.0" stroke="#d4d4d4" stroke-width="1.2"/><line x1="21.4" y1="537.0" x2="14.2" y2="545.6" stroke="#151515" stroke-width="1.9" stroke-linecap="round"/><path d="M14.8,544.8 L12.6,546.8 L9,550.6999999999999 L11.4,547.8 Z" fill="#c9a35a"/><line x1="14.6" y1="545.1999999999999" x2="13" y2="547.0" stroke="#6a6a6a" stroke-width="1.6"/></svg>
<svg class="a" style="left:5px;top:559px" width="20" height="14" viewBox="5 559 20 14"><path d="M7.1,561.4 L13.2,561.4 L13.2,563.2 L9.1,563.2 L9.1,565.2 L12.6,565.2 L12.6,567 L9.1,567 L9.1,569 L13.2,569 L13.2,570.8 L7.1,570.8 Z" fill="#1a4fa8"/><circle cx="18.3" cy="566" r="3.7" fill="#20b4b4" stroke="#1a4fa8" stroke-width="1.3"/><line x1="20" y1="568" x2="22.8" y2="570.8" stroke="#20b4b4" stroke-width="1.6"/></svg>
</body></html>
